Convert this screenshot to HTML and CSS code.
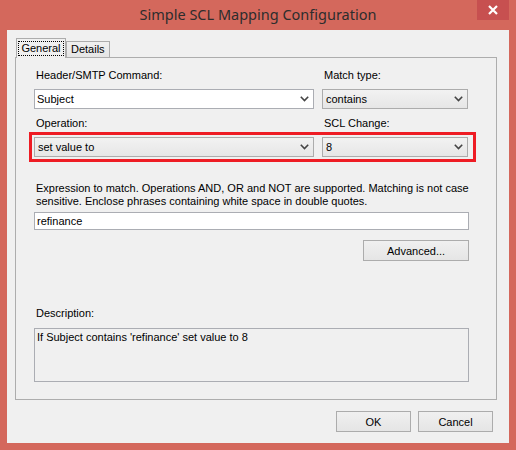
FILE: index.html
```html
<!DOCTYPE html>
<html>
<head>
<meta charset="utf-8">
<link rel="stylesheet" href="styles.css">
</head>
<body>
<div class="window">
  <div class="titlebar">
    <div class="title">Simple SCL Mapping Configuration</div>
    <div class="close"><svg width="12" height="12" viewBox="0 0 12 12"><path d="M2 2 L10 10 M10 2 L2 10" stroke="#fff" stroke-width="2.2"/></svg></div>
  </div>
  <div class="client">
    <div class="tabs">
      <div class="tab active"><span class="focus">General</span></div>
      <div class="tab">Details</div>
    </div>
    <div class="panel">
      <div class="grid">
        <div class="field">
          <div class="label">Header/SMTP Command:</div>
          <div class="combo edit"><span>Subject</span><svg class="chev" width="9" height="6" viewBox="0 0 9 6"><path d="M0.8 0.8 L4.5 4.5 L8.2 0.8" fill="none" stroke="#444" stroke-width="1.6"/></svg></div>
        </div>
        <div class="field">
          <div class="label">Match type:</div>
          <div class="combo"><span>contains</span><svg class="chev" width="9" height="6" viewBox="0 0 9 6"><path d="M0.8 0.8 L4.5 4.5 L8.2 0.8" fill="none" stroke="#444" stroke-width="1.6"/></svg></div>
        </div>
        <div class="field">
          <div class="label">Operation:</div>
          <div class="combo"><span>set value to</span><svg class="chev" width="9" height="6" viewBox="0 0 9 6"><path d="M0.8 0.8 L4.5 4.5 L8.2 0.8" fill="none" stroke="#444" stroke-width="1.6"/></svg></div>
        </div>
        <div class="field">
          <div class="label">SCL Change:</div>
          <div class="combo"><span>8</span><svg class="chev" width="9" height="6" viewBox="0 0 9 6"><path d="M0.8 0.8 L4.5 4.5 L8.2 0.8" fill="none" stroke="#444" stroke-width="1.6"/></svg></div>
        </div>
      </div>
      <div class="highlight"></div>
      <p class="info">Expression to match. Operations AND, OR and NOT are supported. Matching is not case<br>sensitive. Enclose phrases containing white space in double quotes.</p>
      <div class="textbox">refinance</div>
      <div class="adv-row"><div class="button adv">Advanced...</div></div>
      <div class="label desc-label">Description:</div>
      <div class="desc">If Subject contains 'refinance' set value to 8</div>
    </div>
    <div class="footer">
      <div class="button">OK</div>
      <div class="button">Cancel</div>
    </div>
  </div>
</div>
</body>
</html>
```

FILE: styles.css
```css
html, body {
  margin: 0;
  padding: 0;
  background: #d4685c;
}
.window {
  width: 516px;
  height: 450px;
  background: #d4685c;
  box-sizing: border-box;
  padding: 0 7px 7px 7px;
  display: flex;
  flex-direction: column;
  font-family: "Liberation Sans", Arial, sans-serif;
  font-size: 11px;
  color: #000;
}
.titlebar {
  height: 30px;
  position: relative;
  display: flex;
  align-items: center;
  justify-content: center;
}
.title {
  font-family: "Noto Sans", "Open Sans", sans-serif;
  font-size: 14.5px;
  color: #2d2d2d;
  margin-top: -2px;
}
.close {
  position: absolute;
  right: 0;
  top: 0;
  width: 32px;
  height: 20px;
  background: #c75050;
  display: flex;
  align-items: center;
  justify-content: center;
}
.client {
  flex: 1;
  background: #f0f0f0;
  display: flex;
  flex-direction: column;
  padding: 8px 12px 0 8px;
}
.tabs {
  display: flex;
  align-items: flex-end;
  height: 19px;
  padding-left: 1px;
  position: relative;
  z-index: 1;
}
.tab {
  box-sizing: border-box;
  height: 16px;
  border: 1px solid #acacac;
  border-bottom: none;
  background: linear-gradient(#f0f0f0, #e5e5e5);
  padding: 0 4px;
  line-height: 15px;
}
.tab.active {
  height: 20px;
  margin-bottom: -1px;
  background: #f0f0f0;
  padding: 2px 1px 0 1px;
  width: 50px;
  line-height: 13px;
}
.focus {
  display: block;
  border: 1px dotted #000;
  text-align: center;
  height: 15px;
  box-sizing: border-box;
  line-height: 13px;
}
.panel {
  position: relative;
  height: 343px;
  box-sizing: border-box;
  border: 1px solid #adadad;
  background: #f0f0f0;
  padding: 11px 0 0 18px;
}
.grid {
  display: grid;
  grid-template-columns: 280px 146px;
  column-gap: 8px;
  row-gap: 8px;
}
.label {
  line-height: 13px;
  height: 13px;
  padding-left: 2px;
  margin-bottom: 7px;
  color: #000;
}
.combo {
  height: 20px;
  box-sizing: border-box;
  border: 1px solid #acacac;
  background: linear-gradient(#f2f2f2, #e6e6e6);
  display: flex;
  align-items: center;
  justify-content: space-between;
  padding: 0 4px 0 3px;
}
.combo.edit {
  background: #fff;
  border-color: #abadb3;
  padding-left: 2px;
}
.chev {
  display: block;
}
.highlight {
  position: absolute;
  left: 13px;
  top: 74px;
  width: 447px;
  height: 30px;
  border: 3.5px solid #ee1c24;
  box-sizing: border-box;
}
.info {
  margin: 25px 0 0 0;
  padding-left: 2px;
  line-height: 13px;
}
.textbox {
  margin-top: 4px;
  width: 435px;
  height: 18px;
  box-sizing: border-box;
  border: 1px solid #abadb3;
  background: #fff;
  line-height: 16px;
  padding-left: 2px;
}
.adv-row {
  width: 435px;
  display: flex;
  justify-content: flex-end;
  margin-top: 10px;
}
.button {
  box-sizing: border-box;
  height: 21px;
  border: 1px solid #acacac;
  background: linear-gradient(#f0f0f0, #e5e5e5);
  display: flex;
  align-items: center;
  justify-content: center;
  width: 75px;
}
.button.adv {
  width: 106px;
  height: 21px;
}
.desc-label {
  margin-top: 46px;
  margin-bottom: 8px;
}
.desc {
  width: 435px;
  height: 54px;
  box-sizing: border-box;
  border: 1px solid #abadb3;
  background: #f0f0f0;
  padding: 2px 2px;
  line-height: 13px;
}
.footer {
  display: flex;
  justify-content: flex-end;
  gap: 7px;
  margin-top: 11px;
  padding-right: 4px;
}
```
